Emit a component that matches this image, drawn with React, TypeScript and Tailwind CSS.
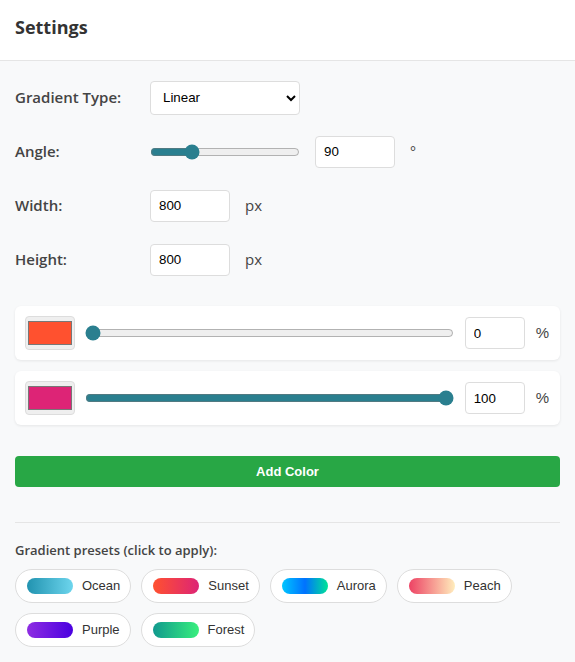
import { useState } from 'react';

const presets = [
  { name: 'Ocean', from: '#2193b0', to: '#6dd5ed' },
  { name: 'Sunset', from: '#ff512f', to: '#dd2476' },
  { name: 'Aurora', from: '#00c6ff', via: '#0072ff', to: '#00e396' },
  { name: 'Peach', from: '#ed4264', to: '#ffedbc' },
  { name: 'Purple', from: '#8e2de2', to: '#4a00e0' },
  { name: 'Forest', from: '#11998e', to: '#38ef7d' },
];

function Row({ label, children }: { label: string; children: React.ReactNode }) {
  return (
    <div className="flex h-[33px] items-center">
      <label className="w-[135px] shrink-0 text-[15px] font-semibold text-[#444]">{label}</label>
      {children}
    </div>
  );
}

export default function App() {
  const [angle, setAngle] = useState(90);
  const [stops, setStops] = useState([
    { color: '#ff512f', pos: 0 },
    { color: '#dd2476', pos: 100 },
  ]);

  const input =
    'h-[32px] rounded border border-[#ddd] bg-white px-[8px] text-[13.33px] text-black outline-none';

  return (
    <div className="min-h-[662px] bg-[#f8f9fa]" style={{ fontFamily: '"Open Sans", sans-serif' }}>
      <div className="flex h-[61px] items-center border-b border-[#e5e5e5] bg-white px-[15px] pb-[6px]">
        <h2 className="text-[18px] font-bold text-[#333]">Settings</h2>
      </div>

      <div className="flex flex-col px-[15px] pt-[20px]">
        <div className="flex flex-col gap-[21px]">
          <Row label="Gradient Type:">
            <select
              className="h-[34px] w-[150px] rounded border border-[#ddd] bg-white px-[8px] text-[13.33px] text-black"
              style={{ fontFamily: '"Liberation Sans", Arial, sans-serif' }}
              defaultValue="linear"
            >
              <option value="linear">Linear</option>
              <option value="radial">Radial</option>
              <option value="conic">Conic</option>
            </select>
          </Row>
          <Row label="Angle:">
            <input
              type="range"
              min={0}
              max={360}
              value={angle}
              onChange={(e) => setAngle(Number(e.target.value))}
              className="w-[150px] accent-[#2a7f8f]"
            />
            <input
              type="number"
              value={angle}
              onChange={(e) => setAngle(Number(e.target.value))}
              className={`${input} ml-[15px] w-[80px]`}
              style={{ fontFamily: '"Liberation Sans", Arial, sans-serif' }}
            />
            <span className="ml-[15px] text-[14px] text-[#444]">°</span>
          </Row>
          <Row label="Width:">
            <input
              type="number"
              defaultValue={800}
              className={`${input} w-[80px]`}
              style={{ fontFamily: '"Liberation Sans", Arial, sans-serif' }}
            />
            <span className="ml-[15px] text-[15px] text-[#444]">px</span>
          </Row>
          <Row label="Height:">
            <input
              type="number"
              defaultValue={800}
              className={`${input} w-[80px]`}
              style={{ fontFamily: '"Liberation Sans", Arial, sans-serif' }}
            />
            <span className="ml-[15px] text-[15px] text-[#444]">px</span>
          </Row>
        </div>

        <div className="mt-[30px] flex flex-col gap-[11px]">
          {stops.map((s, i) => (
            <div
              key={i}
              className="flex h-[54px] items-center rounded-md bg-white pl-[10px] pr-[11px] shadow-[0_1px_3px_rgba(0,0,0,0.08)]"
            >
              <input
                type="color"
                value={s.color}
                onChange={(e) =>
                  setStops(stops.map((x, j) => (j === i ? { ...x, color: e.target.value } : x)))
                }
                className="h-[34px] w-[50px] rounded border border-[#ddd] bg-[#efefef]"
              />
              <input
                type="range"
                min={0}
                max={100}
                value={s.pos}
                onChange={(e) =>
                  setStops(stops.map((x, j) => (j === i ? { ...x, pos: Number(e.target.value) } : x)))
                }
                className="ml-[10px] flex-1 accent-[#2a7f8f]"
              />
              <input
                type="number"
                value={s.pos}
                onChange={(e) =>
                  setStops(stops.map((x, j) => (j === i ? { ...x, pos: Number(e.target.value) } : x)))
                }
                className={`${input} ml-[11px] w-[60px]`}
                style={{ fontFamily: '"Liberation Sans", Arial, sans-serif' }}
              />
              <span
                className="ml-[11px] text-[15px] text-[#444]"
                style={{ fontFamily: '"Liberation Sans", Arial, sans-serif' }}
              >
                %
              </span>
            </div>
          ))}
        </div>

        <button
          className="mt-[31px] h-[31px] w-full rounded bg-[#28a745] text-[13px] font-bold text-white"
          style={{ fontFamily: '"Liberation Sans", Arial, sans-serif' }}
        >
          Add Color
        </button>

        <div className="mt-[35px] border-t border-[#e5e5e5] pt-[18px]">
          <p className="text-[13px] font-semibold text-[#444]">Gradient presets (click to apply):</p>
          <div
            className="mt-[8px] flex flex-wrap gap-x-[10px] gap-y-[10px]"
            style={{ fontFamily: '"Liberation Sans", Arial, sans-serif' }}
          >
            {presets.map((p) => (
              <button
                key={p.name}
                className="flex h-[34px] items-center gap-[9px] rounded-full border border-[#ddd] bg-white pl-[11px] pr-[10px] text-[13px] text-[#333]"
              >
                <span
                  className="h-[16px] w-[46px] rounded-full"
                  style={{
                    background: p.via
                      ? `linear-gradient(90deg, ${p.from}, ${p.via}, ${p.to})`
                      : `linear-gradient(90deg, ${p.from}, ${p.to})`,
                  }}
                />
                {p.name}
              </button>
            ))}
          </div>
        </div>
      </div>
    </div>
  );
}
